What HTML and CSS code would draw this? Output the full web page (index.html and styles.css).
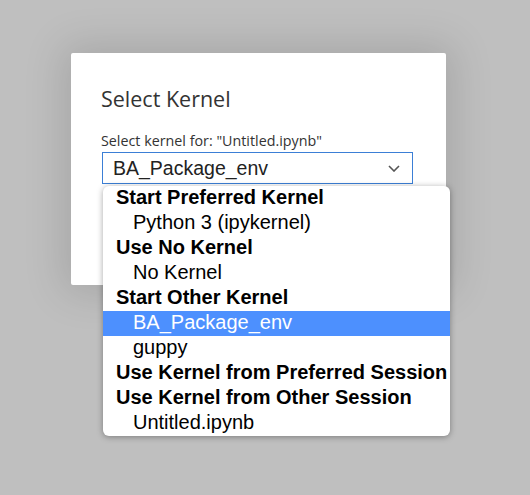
FILE: index.html
```html
<!DOCTYPE html>
<html>
<head>
<meta charset="utf-8">
<link rel="stylesheet" href="styles.css">
</head>
<body>
<div class="dialog">
  <div class="title">Select Kernel</div>
  <div class="label">Select kernel for: "Untitled.ipynb"</div>
  <div class="select-wrap">
    <div class="select">
      <span class="select-value">BA_Package_env</span>
      <svg class="chevron" width="12" height="7" viewBox="0 0 12 7"><path d="M1 1 L6 6 L11 1" fill="none" stroke="#555" stroke-width="1.6"/></svg>
    </div>
    <div class="menu">
      <div class="group">Start Preferred Kernel</div>
      <div class="item">Python 3 (ipykernel)</div>
      <div class="group">Use No Kernel</div>
      <div class="item">No Kernel</div>
      <div class="group">Start Other Kernel</div>
      <div class="item active">BA_Package_env</div>
      <div class="item">guppy</div>
      <div class="group">Use Kernel from Preferred Session</div>
      <div class="group">Use Kernel from Other Session</div>
      <div class="item">Untitled.ipynb</div>
    </div>
  </div>
</div>
</body>
</html>
```

FILE: styles.css
```css
html, body {
  margin: 0;
  height: 100%;
}
body {
  background: #bfbfbf;
  padding: 53px 0 0 71px;
  box-sizing: border-box;
}
.dialog {
  width: 375px;
  height: 232px;
  background: #fff;
  border-radius: 2px;
  box-shadow: 0 0 40px 8px rgba(0,0,0,0.13);
  box-sizing: border-box;
  padding: 32px 30px 0 30px;
  font-family: "Open Sans", "Noto Sans", sans-serif;
  color: #333;
}
.title {
  font-size: 21.5px;
  line-height: 28px;
}
.label {
  margin-top: 19px;
  font-size: 14.3px;
  line-height: 18px;
}
.select-wrap {
  position: relative;
  margin-top: 2px;
  margin-left: 1px;
}
.select {
  width: 311px;
  height: 32px;
  box-sizing: border-box;
  border: 1px solid #3b7fd6;
  display: flex;
  align-items: center;
  justify-content: space-between;
  padding: 0 12px 0 10px;
  font-family: "Liberation Sans", Arial, sans-serif;
  font-size: 19.5px;
  color: #222;
}
.chevron {
  display: block;
}
.menu {
  position: absolute;
  left: 1px;
  top: 34px;
  width: 347px;
  box-sizing: border-box;
  padding: 0;
  background: #fff;
  border-radius: 6px;
  box-shadow: 0 1px 6px rgba(0,0,0,0.35);
  font-family: "Liberation Sans", Arial, sans-serif;
  font-size: 20px;
  color: #000;
}
.group, .item {
  height: 25px;
  line-height: 23px;
  white-space: nowrap;
}
.group {
  font-weight: bold;
  padding-left: 13px;
}
.item {
  padding-left: 30px;
}
.item.active {
  background: #4d90fe;
  color: #fff;
}
```
